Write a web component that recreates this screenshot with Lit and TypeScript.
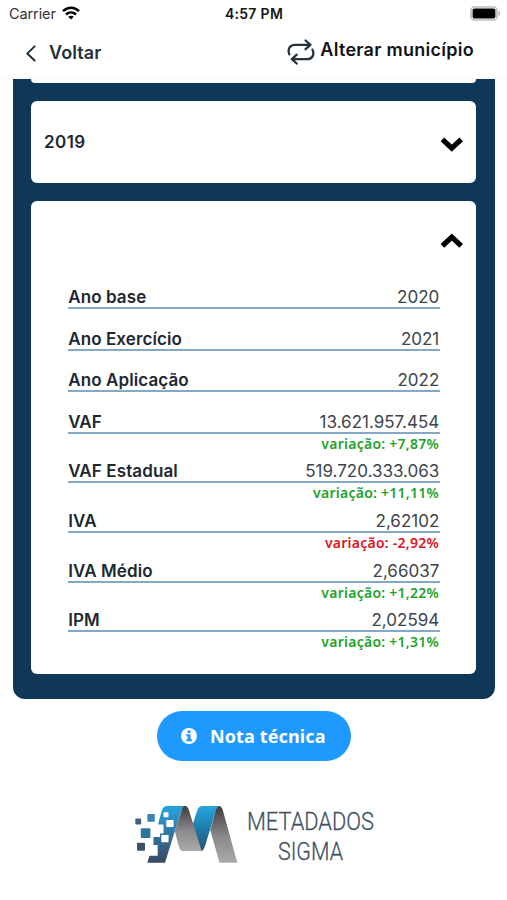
import { LitElement, html, css, nothing } from "lit";
import { customElement, property } from "lit/decorators.js";

interface Entry {
  label: string;
  value: string;
  change?: string;
}

const ENTRIES: Entry[] = [
  { label: "Ano base", value: "2020" },
  { label: "Ano Exercício", value: "2021" },
  { label: "Ano Aplicação", value: "2022" },
  { label: "VAF", value: "13.621.957.454", change: "+7,87%" },
  { label: "VAF Estadual", value: "519.720.333.063", change: "+11,11%" },
  { label: "IVA", value: "2,62102", change: "-2,92%" },
  { label: "IVA Médio", value: "2,66037", change: "+1,22%" },
  { label: "IPM", value: "2,02594", change: "+1,31%" },
];

@customElement("status-bar")
class StatusBar extends LitElement {
  static styles = css`
    :host {
      display: grid;
      grid-template-columns: 1fr auto 1fr;
      align-items: center;
      height: 28px;
      padding: 0 6px 0 9px;
      font: 400 14.5px/28px Inter, sans-serif;
      letter-spacing: -0.1px;
      color: #333;
    }
    .left {
      display: flex;
      align-items: center;
      gap: 6px;
    }
    .time {
      font-weight: 600;
      font-size: 14px;
      color: #161616;
      letter-spacing: 0.3px;
      margin-right: 2px;
    }
    .right {
      display: flex;
      justify-content: flex-end;
    }
    svg {
      display: block;
    }
    .wifi {
      margin-top: -2px;
    }
    .battery {
      margin-top: -2px;
    }
  `;
  render() {
    return html`
      <div class="left">
        <span>Carrier</span>
        <svg class="wifi" width="18" height="14" viewBox="0 0 18 14" fill="none" stroke="#000" stroke-width="2.5">
          <path d="M1 5.2C5.6.6 12.4.6 17 5.2" />
          <path d="M4 8.5c2.9-2.8 7.1-2.8 10 0" />
          <path d="M9 13.6 6.2 10.8c1.6-1.5 4-1.5 5.6 0z" fill="#000" stroke="none" />
        </svg>
      </div>
      <span class="time">4:57 PM</span>
      <div class="right">
        <svg class="battery" width="31" height="15" viewBox="0 0 31 15">
          <rect x="1" y="1" width="26" height="13" rx="3.6" fill="#fff" stroke="#bdbdbd" stroke-width="1.7" />
          <rect x="2.6" y="2.6" width="22.8" height="9.8" rx="2" fill="#000" />
          <path d="M28.6 5c2 .9 2 4.1 0 5z" fill="#aaa" />
        </svg>
      </div>
    `;
  }
}

@customElement("nav-header")
class NavHeader extends LitElement {
  static styles = css`
    :host {
      display: flex;
      justify-content: space-between;
      height: 51px;
      box-sizing: border-box;
      padding: 0 33px 0 25px;
      font: 600 18px/22px Inter, sans-serif;
      border-bottom: 1px solid #f4f5f6;
    }
    .back,
    .change {
      display: flex;
      align-items: flex-start;
    }
    .back {
      padding-top: 13.5px;
      gap: 12px;
      color: #22303c;
      letter-spacing: 0.1px;
    }
    .back svg {
      margin-top: 3px;
    }
    .change {
      padding-top: 11px;
      gap: 5.5px;
      color: #101418;
      letter-spacing: 0.28px;
    }
  `;
  render() {
    return html`
      <div class="back">
        <svg width="12" height="17" viewBox="0 0 12 17" fill="none" stroke="#22303c" stroke-width="2" stroke-linecap="round" stroke-linejoin="round">
          <path d="M9.6 1.4 2.2 8.6l7.4 7" />
        </svg>
        <span>Voltar</span>
      </div>
      <div class="change">
        <svg width="28" height="26" viewBox="0 0 28 26" fill="none" stroke="#26333d" stroke-width="2.3" stroke-linecap="round" stroke-linejoin="round">
          <path d="M2.3 15.3C.2 9.6 3.4 5.8 8 5.8h15" />
          <path d="m18.6 1.5 4.8 4.3-4.8 4.4" />
          <path d="M25.5 10.6c2.5 5.6-.8 9.6-5.6 9.6H5" />
          <path d="m9.7 15.7-4.8 4.5 4.8 4.3" />
        </svg>
        <span>Alterar município</span>
      </div>
    `;
  }
}

@customElement("data-row")
class DataRow extends LitElement {
  @property({ attribute: false }) entry!: Entry;
  static styles = css`
    :host {
      display: block;
    }
    .line {
      display: flex;
      justify-content: space-between;
      height: 22px;
      box-sizing: border-box;
      border-bottom: 2px solid #83a9c7;
      font: 400 17px/20px Inter, sans-serif;
      color: #3d444b;
    }
    .label {
      font-weight: 600;
      color: #1d2831;
      letter-spacing: 0.1px;
    }
    .value {
      margin-right: 0.4px;
    }
    .spacer {
      height: 19.5px;
    }
    .change {
      height: 27.7px;
      box-sizing: border-box;
      padding-right: 0.7px;
      text-align: right;
      font: 600 14px/20px "Noto Sans", sans-serif;
      letter-spacing: 0.25px;
      color: #1ea32b;
    }
    .down {
      color: #d9161c;
    }
  `;
  render() {
    const { label, value, change } = this.entry;
    return html`
      <div class="line"><span class="label">${label}</span><span class="value">${value}</span></div>
      ${change
        ? html`<div class="change ${change.startsWith("-") ? "down" : ""}">variação: ${change}</div>`
        : html`<div class="spacer">${nothing}</div>`}
    `;
  }
}

@customElement("brand-logo")
class BrandLogo extends LitElement {
  static styles = css`
    :host {
      display: flex;
      gap: 10px;
    }
    svg {
      display: block;
      overflow: visible;
    }
    .word {
      font: 300 26.5px "Roboto", sans-serif;
      fill: #41515e;
      stroke: #41515e;
      stroke-width: 0.3px;
    }
  `;
  render() {
    return html`
      <svg width="104" height="64" viewBox="134 804 104 64">
        <defs>
          <linearGradient id="blue" x1="0" y1="0" x2="0" y2="1">
            <stop offset="0" stop-color="#25a3dc" />
            <stop offset=".5" stop-color="#3374a3" />
            <stop offset="1" stop-color="#38485f" />
          </linearGradient>
          <linearGradient id="blue2" x1="0" y1="0" x2="0" y2="1">
            <stop offset="0" stop-color="#27a8df" />
            <stop offset=".5" stop-color="#1c7cab" />
            <stop offset="1" stop-color="#25536f" />
          </linearGradient>
          <linearGradient id="grey" x1="0" y1="0" x2="0" y2="1">
            <stop offset="0" stop-color="#3f3c3d" />
            <stop offset=".55" stop-color="#8b8a8c" />
            <stop offset="1" stop-color="#a9a9ac" />
          </linearGradient>
        </defs>
        <path d="M162 810q1.5-4 5-4h18.5c-3 1-4 4-5 7L165 862.7H147.3l2.2-7h8.200V845h-4.200v-8h6.500v-3.500h3.500v-9H158z" fill="url(#blue)" />
        <path d="M192.300 826 197 811c1-3.500 2.500-5 5.500-5H220c-3 0-4 4-5 7l-9 30c-1.500 5-3 8-4.300 8s-2.500-2-3.500-6z" fill="url(#blue2)" />
        <path d="M174.800 831 181 812c1.500-4.500 2.300-6 4-6 2.500 0 3.500 2.500 4.500 6l12.200 39H183c-2.500 0-3.500-2-4.300-5z" fill="url(#grey)" />
        <path d="M210.300 830 215 813c1-4 2.500-7 4.300-7 2 0 3 2.500 4 6l14 50.700h-17.800z" fill="url(#grey)" />
        <g fill="#fff">
          <rect x="163.5" y="812.3" width="5" height="5" rx=".7" />
          <rect x="166.3" y="820" width="7.3" height="7" rx=".7" />
          <rect x="161.3" y="835" width="7.3" height="7.3" rx=".7" />
        </g>
        <rect x="135.3" y="818.6" width="5.9" height="5.9" rx="1" fill="#45617c" />
        <rect x="147.3" y="814" width="7.5" height="7.7" rx="1" fill="#3e82af" />
        <rect x="140.8" y="828.3" width="9.6" height="9.7" rx="1" fill="#2e739c" />
        <rect x="137" y="842.7" width="8" height="8" rx="1" fill="#3d5367" />
      </svg>
      <svg width="127" height="64" viewBox="0 0 127 64">
        <text class="word" x="-1" y="26" textLength="127" lengthAdjust="spacingAndGlyphs">METADADOS</text>
        <text class="word" x="30" y="56" textLength="65" lengthAdjust="spacingAndGlyphs">SIGMA</text>
      </svg>
    `;
  }
}

@customElement("app-root")
class AppRoot extends LitElement {
  static styles = css`
    :host {
      display: flex;
      flex-direction: column;
      align-items: stretch;
      height: 900px;
      background: #fff;
    }
    .panel {
      margin: 0 12.5px 0 13.3px;
      padding: 0 18.2px 24px;
      background: #0f3858;
      border-radius: 0 0 12px 12px;
      height: 619.5px;
      box-sizing: border-box;
    }
    .card {
      background: #fff;
      border-radius: 6px;
      box-sizing: border-box;
    }
    .cut {
      height: 3.5px;
      border-radius: 0 0 5px 5px;
    }
    .year {
      display: flex;
      justify-content: space-between;
      align-items: center;
      height: 82px;
      margin-top: 18.3px;
      padding: 0 13px 0 12.5px;
      font: 600 17px/22px Inter, sans-serif;
      letter-spacing: 0.45px;
      color: #1d2831;
    }
    .year svg {
      margin-top: 5px;
    }
    .open {
      margin-top: 18.3px;
      height: 473.4px;
      padding: 32px 13px 0 36.7px;
    }
    .toggle {
      display: flex;
      justify-content: flex-end;
      height: 54px;
    }
    .rows {
      width: 371.5px;
    }
    .button {
      align-self: center;
      display: flex;
      align-items: center;
      gap: 13px;
      box-sizing: border-box;
      width: 194px;
      height: 49.5px;
      margin-top: 12.5px;
      padding: 0 0 0 24.5px;
      border: 0;
      border-radius: 25px;
      background: #1e9aff;
      color: #fff;
      font: 700 18px/24px "Noto Sans", sans-serif;
      letter-spacing: 0.12px;
    }
    .logo {
      align-self: flex-start;
      margin: 43px 0 0 134px;
    }
  `;
  render() {
    const chevron = (d: string) => html`
      <svg width="23" height="15" viewBox="0 0 23 15" fill="none" stroke="#000" stroke-width="5.2">
        <path d=${d} />
      </svg>`;
    return html`
      <status-bar></status-bar>
      <nav-header></nav-header>
      <div class="panel">
        <div class="card cut"></div>
        <div class="card year">
          <span>2019</span>
          ${chevron("M2.4 2.4 11.8 11.2 21.2 2.4")}
        </div>
        <div class="card open">
          <div class="toggle">${chevron("M2.4 12.8 11.8 4 21.2 12.8")}</div>
          <div class="rows">${ENTRIES.map((e) => html`<data-row .entry=${e}></data-row>`)}</div>
        </div>
      </div>
      <button class="button">
        <svg width="16" height="16" viewBox="0 0 16 16">
          <circle cx="8" cy="8" r="8" fill="#fff" />
          <path d="M6.6 2.5h3v2.6h-3zM5.3 6.3h4.3v4.9h1.2v2H5.3v-2h1.3V8.3H5.3z" fill="#1e9aff" />
        </svg>
        <span>Nota técnica</span>
      </button>
      <brand-logo class="logo"></brand-logo>
    `;
  }
}
